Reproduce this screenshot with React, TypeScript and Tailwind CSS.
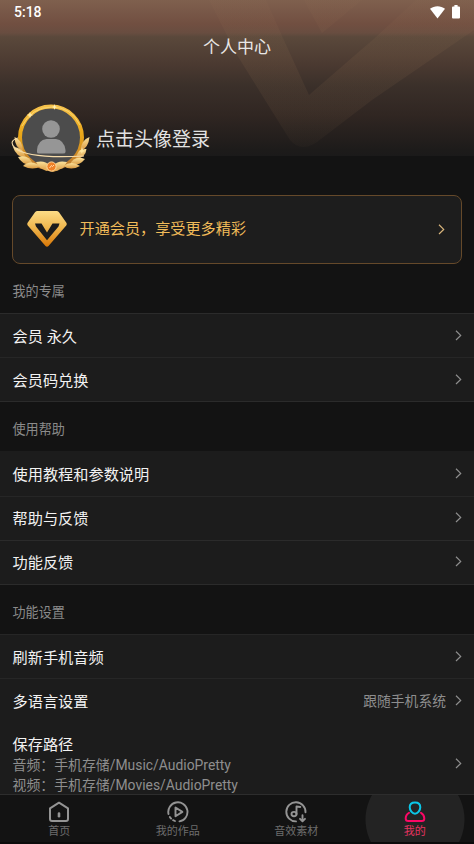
import React from "react";

const FONT = "font-[Roboto,'Noto_Sans_CJK_SC',sans-serif]";

function Chevron({ className = "text-[#8e8e8e]" }: { className?: string }) {
  return (
    <svg width="7" height="12" viewBox="0 0 7 12" fill="none" stroke="currentColor" strokeWidth="1.2" className={className}>
      <path d="M1 .8 5.700 5.400 1 10" />
    </svg>
  );
}

function HeaderArt() {
  return (
    <svg className="absolute inset-0 h-full w-full" viewBox="0 0 474 156" fill="none">
      <defs>
        <linearGradient id="fade" x1="0" y1="0" x2="0" y2="156" gradientUnits="userSpaceOnUse">
          <stop offset="0" stopColor="#b58a60" stopOpacity="0.03" />
          <stop offset="0.35" stopColor="#b58a60" stopOpacity="0.09" />
          <stop offset="0.7" stopColor="#b58a60" stopOpacity="0.08" />
          <stop offset="1" stopColor="#b58a60" stopOpacity="0.02" />
        </linearGradient>
      </defs>
      <path
        fill="url(#fade)"
        fillRule="evenodd"
        d="M209 0H474V30L372 100L317 142Q301 153 290 140L265 100L237 55ZM266 0L282 36L309 95L376 37L416 0H362L322 33L304 0Z"
      />
    </svg>
  );
}

function StatusBar() {
  return (
    <div className="relative flex h-6 items-center justify-between pl-[14px] pr-[14px] text-white">
      <span className="text-[14px] font-medium leading-6">5:18</span>
      <div className="flex items-center gap-[7px]">
        <svg width="15" height="13" viewBox="0 0 15 13" fill="currentColor">
          <path d="M0 2.8C4.4-.7 10.6-.7 15 2.8L7.5 12.5Z" />
        </svg>
        <svg width="8" height="14" viewBox="0 0 8 14" fill="currentColor">
          <path d="M2.4 0h3.2v1.4H7q1 0 1 1v10.1q0 1-1 1H1q-1 0-1-1V2.400q0-1 1-1h1.400Z" />
        </svg>
      </div>
    </div>
  );
}

function Avatar() {
  return (
    <svg width="80" height="70" viewBox="0 0 80 70" fill="none" className="shrink-0">
      <defs>
        <linearGradient id="ring" x1="0" y1="0" x2="0" y2="1">
          <stop offset="0" stopColor="#f5c04a" />
          <stop offset="0.45" stopColor="#eaa718" />
          <stop offset="1" stopColor="#b87532" />
        </linearGradient>
        <linearGradient id="leaf" x1="0" y1="0" x2="0" y2="1">
          <stop offset="0" stopColor="#fbe29b" />
          <stop offset="1" stopColor="#d9983f" />
        </linearGradient>
      </defs>
      <circle cx="40" cy="33.500" r="31" fill="#4c4c4c" stroke="url(#ring)" strokeWidth="4" />
      <path d="M11 22Q21 3 41 3Q60 3 69 21" stroke="#fbdc78" strokeWidth=".8" />
      <circle cx="40" cy="25" r="8.800" fill="#969696" />
      <path d="M26 48V46Q27 36 35.500 35H45Q53 36 54.500 46V48Q54.500 49.500 52 49.500H28Q26 49.500 26 48Z" fill="#969696" />
      <g fill="url(#leaf)">
        <path d="M3.500 33Q11.500 36 12 47Q4 44 3.500 33Z" />
        <path d="M2 43Q12 43 15 54Q5 53 2 43Z" />
        <path d="M7 53Q18 50 22 60.500Q12 62 7 53Z" />
        <path d="M12 62Q19 55 30 62Q22 67 12 62Z" />
        <path d="M78.500 33Q70 36 69.500 47Q77.500 44 78.500 33Z" />
        <path d="M75.500 45Q66 44 65 55Q74.500 54 75.500 45Z" />
        <path d="M74 55Q63 51 59 60.500Q68 62.500 74 55Z" />
        <path d="M69 62Q61 56 52 62Q60 67 69 62Z" />
        <path d="M25 58Q34 56 38 61L36 67L29 64Z" />
        <path d="M56 58Q47 56 43 61L45 67L52 64Z" />
        <path d="M33 66L40 61L48 66L42 68Z" />
      </g>
      <path d="M7 34Q-3 37 4 44Q17 55 73 52" stroke="#f6dcaa" strokeWidth="1.100" />
      <circle cx="40.500" cy="62.500" r="4.600" fill="#ef8128" stroke="#ffd698" strokeWidth="1" />
      <path d="M38.500 64L40.500 61.500L41.500 62.500L43 61" stroke="#ffe7bd" strokeWidth=".9" />
      <path d="M43.500 0L44.200 2.300L46 3L44.200 3.700L43.500 6L42.800 3.700L41 3L42.800 2.300Z" fill="#fff0b5" />
      <path d="M19 8L20 10L22 11L20 12L19 14L18 12L16 11L18 10ZM71 43L72 46L74 47L71.500 48L71 50L70 48L68 47L70 46Z" fill="#ffe7a0" />
    </svg>
  );
}

function VipGem() {
  return (
    <svg width="40" height="36" viewBox="0 0 40 36" className="mb-[2px]">
      <defs>
        <linearGradient id="gem" x1="0" y1="0" x2="0" y2="1">
          <stop offset="0" stopColor="#fcdc86" />
          <stop offset="0.45" stopColor="#f0b850" />
          <stop offset="1" stopColor="#d97706" />
        </linearGradient>
      </defs>
      <path d="M10.500 0H29.500Q31 0 32 1.200L39.200 11.500Q40.400 13.200 39 14.800L21.500 35Q20 36.600 18.500 35L1 14.800Q-.4 13.200.8 11.500L8 1.200Q9 0 10.500 0Z" fill="url(#gem)" />
      <path d="M8 12.500H14.500L20 21.500L25.500 12.500H32.500L31.500 15.500L20 29.300L9 15.500Z" fill="#1d1d1d" />
    </svg>
  );
}

function SectionTitle({ children, className }: { children: React.ReactNode; className: string }) {
  return <h2 className={`pl-[12.500px] text-[13.100px] text-[#8b8b8b] ${className}`}>{children}</h2>;
}

function Row({ label, last = false }: { label: string; last?: boolean }) {
  return (
    <div className={`flex h-[44.200px] items-center justify-between border-b pl-[12.500px] pr-3 ${last ? "border-[#2b2b2b]" : "border-[#262626]"}`}>
      <span className="pt-[3px] text-[15.200px] text-[#f2f2f2]">{label}</span>
      <Chevron />
    </div>
  );
}

function HomeIcon() {
  return (
    <svg width="22" height="22" viewBox="0 0 22 22" fill="none" stroke="#949494" strokeWidth="2" strokeLinejoin="round" strokeLinecap="round">
      <path d="M2 7.300 11 1.700 20 7.300V18Q20 20 18 20H4Q2 20 2 18Z" />
      <path d="M11 12.500V15.300" strokeWidth="2.600" />
    </svg>
  );
}

function WorksIcon() {
  return (
    <svg width="22" height="22" viewBox="0 0 22 22" fill="none" stroke="#949494" strokeWidth="1.900" strokeLinejoin="round" strokeLinecap="round">
      <path d="M1.500 13A9.600 9.600 0 1 1 12.500 20.400M2.900 16.100 4.100 17.600M6.100 19.200 7.900 20" />
      <path d="M8.500 6.500V15.300L15.400 10.900Z" />
    </svg>
  );
}

function SoundIcon() {
  return (
    <svg width="22" height="22" viewBox="0 0 22 22" fill="none" stroke="#949494" strokeWidth="1.900" strokeLinejoin="round" strokeLinecap="round">
      <path d="M20.500 11.300A9.600 9.600 0 1 0 11 20.400" />
      <path d="M11.500 13V5.500L15.300 6" />
      <ellipse cx="9" cy="13.100" rx="2.500" ry="2.200" />
      <path d="M17.500 14.200V20M15 17.800 17.500 20.300 20 17.800" />
    </svg>
  );
}

function MineIcon() {
  return (
    <svg width="22" height="22" viewBox="0 0 22 22" fill="none" strokeWidth="2">
      <path d="M5 11.800Q1.700 13.500 1.700 17.500Q1.700 20 4.200 20H17.800Q20.300 20 20.300 17.500Q20.300 13.500 17 11.800" stroke="#fb0866" strokeLinecap="round" />
      <path d="M11 1.400C7.700 1.400 5.700 3.500 5.700 6.300C5.700 9.200 8.300 12.700 11 12.700C13.700 12.700 16.300 9.200 16.300 6.300C16.300 3.500 14.300 1.400 11 1.400Z" stroke="#0bc6e6" />
    </svg>
  );
}

const tabs = [
  { label: "首页", Icon: HomeIcon },
  { label: "我的作品", Icon: WorksIcon },
  { label: "音效素材", Icon: SoundIcon },
  { label: "我的", Icon: MineIcon, active: true },
];

export default function App() {
  return (
    <div className={`flex h-[844px] w-[474px] flex-col overflow-hidden bg-[#131313] ${FONT}`}>
      <header className="relative h-[156px] shrink-0 bg-[linear-gradient(180deg,#7f604e_0px,#714f41_24px,#684d40_33px,#5a483b_37px,#4b3a31_64px,#3b302a_85px,#302622_115px,#1d1b1a_150px,#1b1a1a_156px)]">
        <HeaderArt />
        <StatusBar />
        <h1 className="relative flex h-[47px] items-center justify-center text-[17px] text-[#e9e7e6]">个人中心</h1>
        <div className="relative mt-[33px] flex items-start pl-[10.500px]">
          <Avatar />
          <span className="ml-[5.500px] mt-[22px] text-[19px] leading-7 text-[#e2e2e2]">点击头像登录</span>
        </div>
      </header>

      <div className="mx-3 mt-[39px] flex h-[69px] shrink-0 items-center rounded-[8px] border border-[#65492a] bg-[#1d1d1d] pl-[14px] pr-4">
        <VipGem />
        <span className="ml-[12.500px] flex-1 text-[15.150px] text-[#f0bb59]">开通会员，享受更多精彩</span>
        <Chevron className="text-[#d9b57c]" />
      </div>

      <SectionTitle className="h-[49px] shrink-0 leading-[55px]">我的专属</SectionTitle>
      <section className="shrink-0 border-t border-[#2b2b2b] bg-[#1c1c1c]">
        <Row label="会员 永久" />
        <Row label="会员码兑换" last />
      </section>

      <SectionTitle className="h-[49px] shrink-0 leading-[56px]">使用帮助</SectionTitle>
      <section className="shrink-0 border-t border-[#1c1c1c] bg-[#1c1c1c]">
        <Row label="使用教程和参数说明" />
        <Row label="帮助与反馈" last />
        <Row label="功能反馈" last />
      </section>

      <SectionTitle className="h-[49px] shrink-0 leading-[56px]">功能设置</SectionTitle>
      <section className="min-h-0 flex-1 border-t border-[#262626] bg-[#1c1c1c]">
        <Row label="刷新手机音频" />
        <div className="flex h-[44px] items-center justify-between pl-[12.500px] pr-3">
          <span className="pt-[2px] text-[15.200px] text-[#f2f2f2]">多语言设置</span>
          <div className="flex items-center gap-[9px]">
            <span className="text-[13.800px] text-[#8e8e8e]">跟随手机系统</span>
            <Chevron />
          </div>
        </div>
        <div className="flex items-center justify-between pl-[12.500px] pr-3 pt-[10px]">
          <div>
            <p className="pt-[2px] text-[15.200px] leading-5 text-[#f2f2f2]">保存路径</p>
            <p className="text-[13.900px] leading-5 text-[#8e8e8e]">音频：手机存储/Music/AudioPretty</p>
            <p className="text-[13.900px] leading-5 text-[#8e8e8e]">视频：手机存储/Movies/AudioPretty</p>
          </div>
          <Chevron />
        </div>
      </section>

      <nav className="relative grid h-[50px] shrink-0 grid-cols-4 overflow-hidden border-b-2 border-t border-b-[#0b0b0b] border-t-[#2d2d2d] bg-[#131313]">
        {tabs.map(({ label, Icon, active }) => (
          <div key={label} className="relative flex flex-col items-center pt-[6px]">
            {active && <span className="absolute left-1/2 top-[-25px] size-[99px] -translate-x-1/2 rounded-full bg-[#232323]" />}
            <span className="relative"><Icon /></span>
            <span className={`relative mt-[2px] text-[11px] leading-[14px] ${active ? "text-[#e63361]" : "text-[#6d6d6d]"}`}>{label}</span>
          </div>
        ))}
      </nav>
    </div>
  );
}
